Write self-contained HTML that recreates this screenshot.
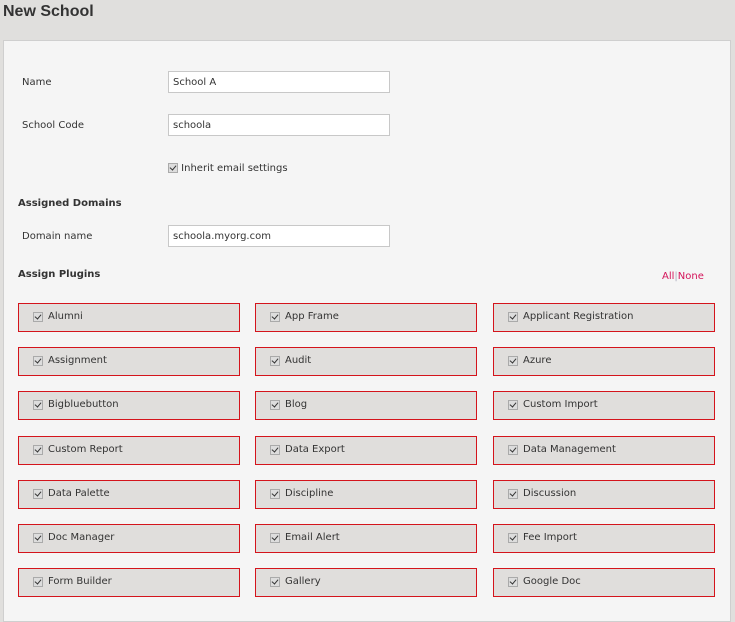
<!DOCTYPE html>
<html><head><style>
body{margin:0;width:735px;height:600px;overflow:hidden;background:#e0dfdd;font-family:"DejaVu Sans","Liberation Sans",sans-serif;font-size:10px;color:#333;position:relative}
h1{position:absolute;left:3px;top:3px;margin:0;font-size:16px;font-weight:bold;color:#333;font-family:"Liberation Sans",sans-serif}
.panel{position:absolute;left:3px;top:40px;width:726px;height:580px;background:#f5f5f5;border:1px solid #cfcfcf}
.a{position:absolute}
.lbl{font-size:10px;color:#333}
.inp{position:absolute;left:168px;background:#fff;border:1px solid #c8c8c8;font-size:10px;line-height:22px;padding-left:4px;box-sizing:border-box;width:222px;height:22px}
.h{font-weight:bold;font-size:10px;color:#333}
.cb{display:inline-block;width:8px;height:8px;border:1px solid #aaa;background:#ddd;position:relative;vertical-align:middle}
.cb:after{content:"";position:absolute;left:2px;top:0px;width:3px;height:5px;border:solid #333;border-width:0 1.5px 1.5px 0;transform:rotate(40deg)}
.box{position:absolute;width:220px;height:27px;border:1px solid #d4141c;background:#e0dedc}
.box .cb{position:absolute;left:14px;top:8px}
.box span{position:absolute;left:29px;top:7px;font-size:10px;color:#333}
</style></head><body>
<h1>New School</h1>
<div class="panel"></div>
<div class="a lbl" style="left:22px;top:77px">Name</div>
<div class="inp" style="top:71px">School A</div>
<div class="a lbl" style="left:22px;top:120px">School Code</div>
<div class="inp" style="top:114px">schoola</div>
<div class="a lbl" style="left:168px;top:163px"><span class="cb"></span> Inherit email settings</div>
<div class="a h" style="left:18px;top:198px">Assigned Domains</div>
<div class="a lbl" style="left:22px;top:231px">Domain name</div>
<div class="inp" style="top:225px">schoola.myorg.com</div>
<div class="a h" style="left:18px;top:269px">Assign Plugins</div>
<div class="a" style="left:662px;top:271px;color:#d4145a">All<span style="color:#aab">|</span>None</div>
<div id="g"></div>
<script>
var n=["Alumni","App Frame","Applicant Registration","Assignment","Audit","Azure","Bigbluebutton","Blog","Custom Import","Custom Report","Data Export","Data Management","Data Palette","Discipline","Discussion","Doc Manager","Email Alert","Fee Import","Form Builder","Gallery","Google Doc"];
var xs=[18,255,493],ys=[303,347,391,436,480,524,568],h="";
n.forEach(function(t,i){h+='<div class="box" style="left:'+xs[i%3]+'px;top:'+ys[Math.floor(i/3)]+'px"><i class="cb"></i><span>'+t+'</span></div>';});
document.getElementById("g").innerHTML=h;
</script>
</body></html>
